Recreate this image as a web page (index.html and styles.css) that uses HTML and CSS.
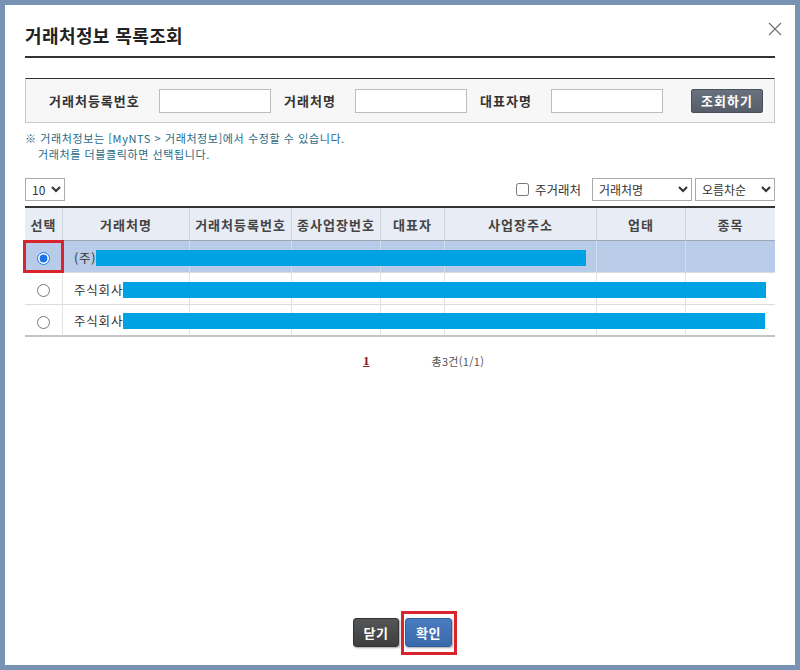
FILE: index.html
```html
<!DOCTYPE html>
<html lang="ko">
<head>
<meta charset="utf-8">
<title>거래처정보 목록조회</title>
<link rel="stylesheet" href="styles.css">
</head>
<body>
<div class="dialog">
  <h1 class="title">거래처정보 목록조회</h1>
  <button class="close" type="button" aria-label="닫기">
    <svg width="14" height="14" viewBox="0 0 14 14"><path d="M1 1L13 13M13 1L1 13" stroke="#6e6e6e" stroke-width="1.1" fill="none"/></svg>
  </button>

  <div class="search">
    <label class="lbl lbl-1">거래처등록번호</label>
    <input class="inp" type="text">
    <label class="lbl lbl-2">거래처명</label>
    <input class="inp" type="text">
    <label class="lbl lbl-2">대표자명</label>
    <input class="inp" type="text">
    <button class="btn-search" type="button">조회하기</button>
  </div>

  <div class="notes">
    <p>※ 거래처정보는 [MyNTS &gt; 거래처정보]에서 수정할 수 있습니다.</p>
    <p class="indent">거래처를 더블클릭하면 선택됩니다.</p>
  </div>

  <div class="controls">
    <select class="sel sel-count"><option>10</option></select>
    <div class="controls-right">
      <label class="chk"><input type="checkbox"><span>주거래처</span></label>
      <select class="sel sel-field"><option>거래처명</option></select>
      <select class="sel sel-order"><option>오름차순</option></select>
    </div>
  </div>

  <table class="grid">
    <colgroup>
      <col style="width:37px"><col style="width:127px"><col style="width:102px"><col style="width:89px">
      <col style="width:64px"><col style="width:152px"><col style="width:89px"><col style="width:90px">
    </colgroup>
    <thead>
      <tr><th>선택</th><th>거래처명</th><th>거래처등록번호</th><th>종사업장번호</th><th>대표자</th><th>사업장주소</th><th>업태</th><th>종목</th></tr>
    </thead>
    <tbody>
      <tr class="selected">
        <td class="c-radio marked"><input type="radio" name="pick" checked></td>
        <td class="c-name"><span class="nm">(주)</span><span class="redact" style="width:490px"></span></td>
        <td></td><td></td><td></td><td></td><td></td><td></td>
      </tr>
      <tr>
        <td class="c-radio"><input type="radio" name="pick"></td>
        <td class="c-name"><span class="nm">주식회사</span><span class="redact" style="width:643px"></span></td>
        <td></td><td></td><td></td><td></td><td></td><td></td>
      </tr>
      <tr>
        <td class="c-radio"><input type="radio" name="pick"></td>
        <td class="c-name"><span class="nm">주식회사</span><span class="redact" style="width:642px"></span></td>
        <td></td><td></td><td></td><td></td><td></td><td></td>
      </tr>
    </tbody>
  </table>

  <div class="pager">
    <a class="page-num" href="#">1</a>
    <span class="total">총3건(1/1)</span>
  </div>

  <div class="actions">
    <button class="btn btn-close" type="button">닫기</button>
    <span class="marked-btn"><button class="btn btn-ok" type="button">확인</button></span>
  </div>
</div>
</body>
</html>
```

FILE: styles.css
```css
* { box-sizing: border-box; }
html, body { margin: 0; padding: 0; }
body {
  background: #7892b4;
  padding: 5px;
  width: 800px;
  height: 670px;
  font-family: "Noto Sans CJK KR", "Noto Sans", sans-serif;
  color: #333;
}
.dialog {
  position: relative;
  width: 790px;
  height: 660px;
  background: #fff;
  padding: 0 20px;
  display: flex;
  flex-direction: column;
}
.title {
  margin: 17px 0 0;
  height: 36px;
  padding-bottom: 8px;
  line-height: 26px;
  font-size: 18px;
  font-weight: 700;
  color: #222;
  border-bottom: 2px solid #333;
  letter-spacing: 0.4px;
}
.close {
  position: absolute;
  left: 763px;
  top: 17px;
  width: 14px;
  height: 14px;
  padding: 0;
  border: 0;
  background: none;
  display: block;
}
.close svg { display: block; }

.search {
  margin-top: 20px;
  height: 45px;
  border: 1px solid #c8c8c8;
  border-top-color: #333;
  background: #f7f7f7;
  display: flex;
  align-items: center;
  padding-left: 23px;
}
.lbl {
  font-size: 13px;
  font-weight: 700;
  color: #333;
  white-space: nowrap;
  letter-spacing: 1px;
}
.lbl-1 { width: 110px; }
.lbl-2 { width: 71px; margin-left: 13px; }
.inp {
  width: 112px;
  height: 24px;
  border: 1px solid #bdbdbd;
  background: #fff;
  margin: 0;
  padding: 0 4px;
}
.btn-search {
  margin-left: 28px;
  width: 72px;
  height: 24px;
  border: 1px solid #4b515c;
  border-radius: 2px;
  background: linear-gradient(#6a717e, #575e6a);
  color: #fff;
  font-family: inherit;
  font-size: 13px;
  font-weight: 700;
  letter-spacing: 1px;
  padding: 0;
}

.notes {
  margin-top: 7px;
  font-size: 11px;
  line-height: 16px;
  color: #1f6a86;
  letter-spacing: 0.6px;
}
.notes p { margin: 0; height: 16px; white-space: nowrap; }
.notes .indent { padding-left: 13px; }

.controls {
  margin-top: 16px;
  height: 23px;
  display: flex;
  justify-content: space-between;
  align-items: center;
}
.controls-right {
  display: flex;
  align-items: center;
}
.sel {
  height: 23px;
  margin: 0;
  font-family: inherit;
  font-size: 12px;
  color: #333;
  border: 1px solid #aaa;
  border-radius: 0;
  background: #fff;
  padding: 0 2px;
}
.sel-count { width: 40px; }
.sel-field { width: 100px; margin-left: 11px; }
.sel-order { width: 80px; margin-left: 3px; }
.chk {
  display: flex;
  align-items: center;
  font-size: 12.5px;
  color: #333;
}
.chk input { margin: 0 6px 0 0; width: 13px; height: 13px; }

.grid {
  margin-top: 5px;
  width: 750px;
  table-layout: fixed;
  border-collapse: separate;
  border-spacing: 0;
  border-top: 2px solid #333;
}
.grid th {
  height: 33px;
  padding: 0;
  background: #e8ecf4;
  font-size: 13px;
  font-weight: 700;
  color: #444;
  text-align: center;
  border-bottom: 1px solid #9ca6b6;
  border-left: 1px solid #cfd5df;
  white-space: nowrap;
  letter-spacing: 1px;
}
.grid th:first-child { border-left: 0; }
.grid td {
  height: 32px;
  padding: 0;
  border-bottom: 1px solid #dcdcdc;
  border-left: 1px solid #e2e2e2;
  font-size: 12.5px;
  color: #333;
  white-space: nowrap;
  overflow: visible;
}
.grid td:first-child { border-left: 0; }
.grid tbody tr:last-child td { border-bottom: 2px solid #c4c4c4; }
.grid tr.selected td {
  background: #b8cbe8;
  border-left-color: #d2dcec;
}
.grid tr.selected td:first-child { border-left: 0; }
.c-radio { text-align: center; }
.c-radio input {
  margin: 0;
  width: 13px;
  height: 13px;
  vertical-align: middle;
  accent-color: #1a73e8;
}
.c-name { padding-left: 11px !important; }
.c-name span { vertical-align: middle; }
.nm { letter-spacing: 0.8px; }
.redact {
  display: inline-block;
  height: 16px;
  background: #00a2e4;
}
.marked { position: relative; }
.marked::after {
  content: "";
  position: absolute;
  left: -2px;
  right: -2px;
  top: -1px;
  bottom: -1px;
  border: 3px solid #d9232d;
}

.pager {
  margin-top: 15px;
  height: 18px;
  line-height: 18px;
  padding-left: 338px;
  display: flex;
  align-items: center;
}
.page-num {
  font-family: "Liberation Serif", serif;
  font-size: 13px;
  font-weight: 700;
  color: #8c1c1c;
  text-decoration: underline;
}
.total {
  margin-left: 62px;
  font-size: 11px;
  color: #555;
  letter-spacing: 0.3px;
}

.actions {
  margin-top: auto;
  padding-bottom: 18px;
  display: flex;
  justify-content: center;
  padding-left: 5px;
}
.btn {
  height: 29px;
  border-radius: 3px;
  color: #fff;
  font-family: inherit;
  font-size: 13px;
  font-weight: 700;
  letter-spacing: 0.5px;
  padding: 0;
  box-shadow: 1px 1px 2px rgba(0,0,0,0.35);
}
.btn-close {
  width: 46px;
  border: 1px solid #333;
  background: linear-gradient(#555, #3f3f3f);
}
.btn-ok {
  width: 47px;
  border: 1px solid #2f5e9e;
  background: linear-gradient(#4a7cc0, #3a69ab);
  display: block;
}
.marked-btn {
  position: relative;
  margin-left: 6px;
  display: block;
}
.marked-btn::after {
  content: "";
  position: absolute;
  left: -4px;
  right: -5px;
  top: -7px;
  bottom: -8px;
  border: 3px solid #d9232d;
}
```
